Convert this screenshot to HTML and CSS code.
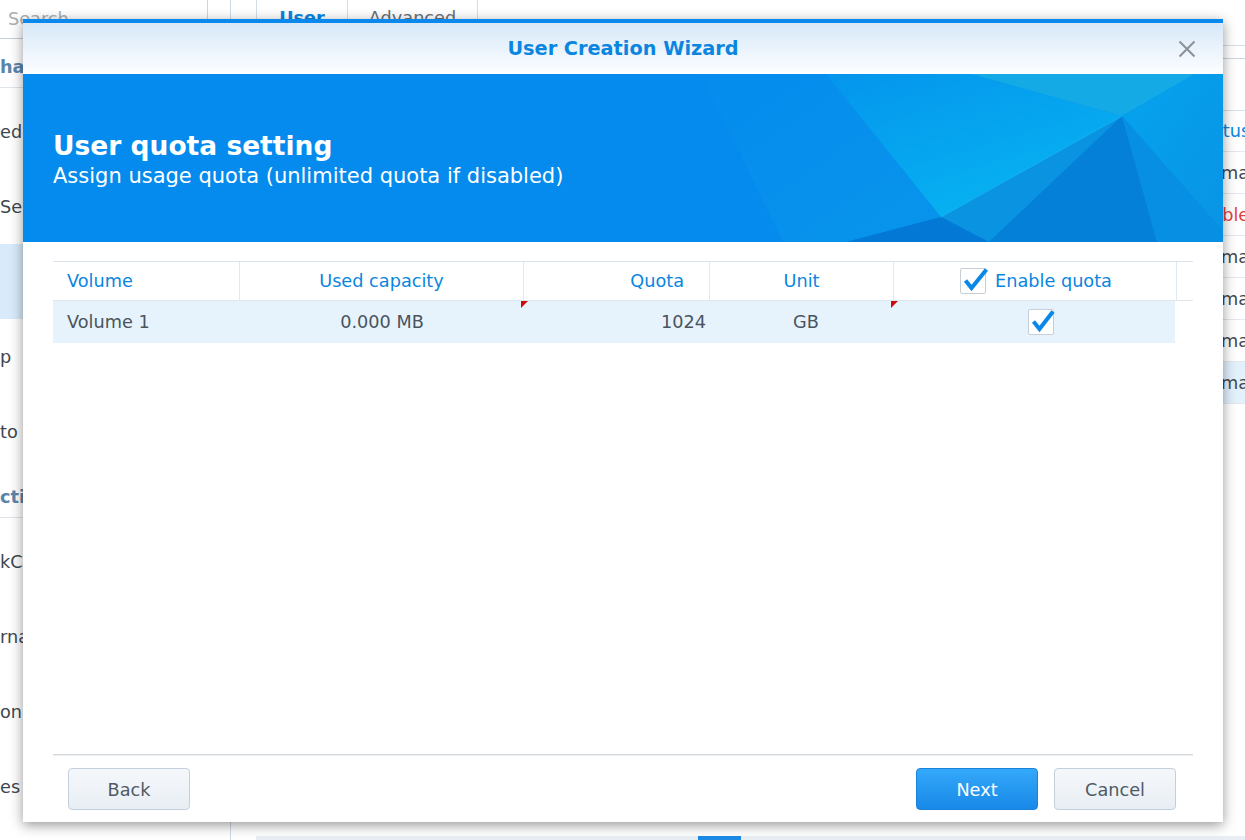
FILE: index.html
```html
<!DOCTYPE html>
<html lang="en">
<head>
<meta charset="utf-8">
<title>User Creation Wizard</title>
<link rel="stylesheet" href="styles.css">
</head>
<body>
<div class="app">
  <aside class="sidebar">
    <div class="search">Search</div>
    <div class="sec">har</div>
    <div class="item">ed</div>
    <div class="item">Ser</div>
    <div class="item item-active"></div>
    <div class="item">p</div>
    <div class="item">to</div>
    <div class="sec">cti</div>
    <div class="item">kC</div>
    <div class="item">rna</div>
    <div class="item">on</div>
    <div class="item">es</div>
  </aside>
  <main class="main">
    <div class="tabs">
      <div class="tab tab-active">User</div>
      <div class="tab">Advanced</div>
    </div>
    <div class="toolbar"></div>
    <div class="list">
      <div class="lrow lhead"><span></span><span class="lcell">Status</span></div>
      <div class="lrow"><span></span><span class="lcell">Normal</span></div>
      <div class="lrow"><span></span><span class="lcell red">Disabled</span></div>
      <div class="lrow"><span></span><span class="lcell">Normal</span></div>
      <div class="lrow"><span></span><span class="lcell">Normal</span></div>
      <div class="lrow"><span></span><span class="lcell">Normal</span></div>
      <div class="lrow lsel"><span></span><span class="lcell">Normal</span></div>
    </div>
    <div class="spacer"></div>
    <div class="pager"><span class="pg-active"></span></div>
  </main>
</div>

<div class="dialog">
  <div class="dlg-head">
    <span class="dlg-title">User Creation Wizard</span>
    <span class="close" aria-label="Close">
      <svg width="18" height="18" viewBox="0 0 18 18"><path d="M1.5 1.5 L16.5 16.5 M16.5 1.5 L1.5 16.5" stroke="#8c9196" stroke-width="2" fill="none"/></svg>
    </span>
  </div>
  <div class="banner">
    <svg class="banner-art" width="1200" height="168" viewBox="0 0 1200 168" preserveAspectRatio="none">
      <defs>
        <linearGradient id="g2" x1="0" y1="0" x2="0.6" y2="1">
          <stop offset="0" stop-color="#0495ed"/>
          <stop offset="1" stop-color="#07b3f1"/>
        </linearGradient>
        <linearGradient id="g1" x1="0" y1="0" x2="1" y2="1">
          <stop offset="0" stop-color="#058cee"/>
          <stop offset="1" stop-color="#0894eb"/>
        </linearGradient>
        <linearGradient id="g4" x1="0" y1="0" x2="1" y2="1">
          <stop offset="0" stop-color="#05a3ee"/>
          <stop offset="1" stop-color="#0894e4"/>
        </linearGradient>
      </defs>
      <rect x="0" y="0" width="1200" height="168" fill="#048bed"/>
      <polygon points="678,0 803,0 918,143 823,168 760,168" fill="url(#g1)"/>
      <polygon points="803,0 948,0 1099,42 918,143" fill="url(#g2)"/>
      <polygon points="948,0 1172,0 1099,42" fill="#14aae6"/>
      <polygon points="1172,0 1200,0 1200,157 1099,42" fill="url(#g4)"/>
      <polygon points="918,143 1099,42 966,168" fill="#0993e0"/>
      <polygon points="918,143 966,168 823,168" fill="#0379d5"/>
      <polygon points="1099,42 966,168 1134,168" fill="#0580d9"/>
      <polygon points="1099,42 1134,168 1200,168 1200,157" fill="#0790e3"/>
      <line x1="918" y1="143" x2="1099" y2="42" stroke="#20c0f4" stroke-width="1" opacity="0.6"/>
    </svg>
    <div class="banner-text">
      <h1 class="banner-title">User quota setting</h1>
      <p class="banner-sub">Assign usage quota (unlimited quota if disabled)</p>
    </div>
  </div>
  <div class="dlg-body">
    <div class="grid">
      <div class="ghead">
        <div class="hc hc-left">Volume</div>
        <div class="hc hc-center">Used capacity</div>
        <div class="hc hc-right">Quota</div>
        <div class="hc hc-center">Unit</div>
        <div class="hc hc-center hc-check">
          <span class="cb"><svg class="tick" width="26" height="26" viewBox="0 0 26 26"><path d="M5.5 12.5 L11.5 20 L26.5 1.5" stroke="#0a88e8" stroke-width="4" fill="none" stroke-linejoin="miter"/></svg></span>
          <span>Enable quota</span>
        </div>
        <div class="hc hc-last"></div>
      </div>
      <div class="grow">
        <div class="dc dc-left">Volume 1</div>
        <div class="dc dc-center">0.000 MB</div>
        <div class="dc dc-right dirty">1024</div>
        <div class="dc dc-center dc-unit">GB</div>
        <div class="dc dc-center dc-check dirty">
          <span class="cb"><svg class="tick" width="26" height="26" viewBox="0 0 26 26"><path d="M5.5 12.5 L11.5 20 L25 2.5" stroke="#0a88e8" stroke-width="4" fill="none" stroke-linejoin="miter"/></svg></span>
        </div>
      </div>
    </div>
  </div>
  <div class="dlg-foot">
    <button class="btn">Back</button>
    <div class="foot-right">
      <button class="btn btn-primary">Next</button>
      <button class="btn">Cancel</button>
    </div>
  </div>
</div>
</body>
</html>
```
FILE: styles.css
```css
* { box-sizing: border-box; margin: 0; padding: 0; }
html, body { width: 1245px; height: 840px; overflow: hidden; }
body {
  font-family: "DejaVu Sans", Verdana, sans-serif;
  font-size: 17.7px;
  color: #3f4952;
  background: #fff;
  position: relative;
}

/* background application */
.app { display: flex; height: 840px; }
.sidebar {
  width: 231px;
  flex: none;
  border-right: 1px solid #d0d8e0;
  overflow: hidden;
  white-space: nowrap;
}
.search {
  width: 208px;
  height: 39px;
  border-right: 1px solid #cbd5df;
  border-bottom: 1px solid #c3ced9;
  line-height: 38px;
  padding-left: 8px;
  color: #a9aeb4;
}
.sec {
  height: 49px;
  padding-top: 7px;
  border-bottom: 1px solid #dde4ea;
  margin-bottom: 6px;
  display: flex;
  align-items: center;
  font-weight: bold;
  color: #5a85ab;
}
.item {
  height: 75px;
  line-height: 75px;
  color: #3e4750;
  padding-top: 1px;
}
.item-active { background: #d9ebfb; }

.main {
  flex: 1;
  display: flex;
  flex-direction: column;
  overflow: hidden;
}
.tabs {
  height: 46px;
  border-bottom: 1px solid #d5dde5;
  padding-left: 25px;
  display: flex;
}
.tab {
  height: 36px;
  line-height: 36px;
  text-align: center;
  border-left: 1px solid #d5dde6;
  color: #6a7077;
  width: 131px;
}
.tab:last-child { border-right: 1px solid #d5dde6; }
.tab-active { width: 91px; color: #0a86e0; font-weight: bold; }
.toolbar {
  margin-top: 12px;
  border-top: 1px solid #ccd5de;
  height: 52px;
}
.list { margin-left: 25px; margin-right: -52px; }
.lrow {
  display: grid;
  grid-template-columns: 1fr 150px;
  height: 42px;
  border-bottom: 1px solid #e2e8ee;
  align-items: center;
}
.lhead { border-top: 1px solid #d8e0e8; color: #0a86e0; }
.lcell { text-align: center; }
.red { color: #e6403f; }
.lsel { background: #e3f1fd; }
.spacer { flex: 1; }
.pager {
  flex: none;
  height: 30px;
  margin-bottom: -26px;
  margin-left: 25px;
  background: #e8eef4;
  display: flex;
}
.pg-active { margin-left: 442px; width: 43px; background: #1c8be6; }

/* dialog window */
.dialog {
  position: absolute;
  left: 23px;
  top: 19px;
  width: 1200px;
  height: 803px;
  background: #fff;
  border-top: 4px solid #0a88ec;
  box-shadow: 0 3px 12px rgba(0, 0, 0, 0.42);
  display: flex;
  flex-direction: column;
}
.dlg-head {
  height: 51px;
  flex: none;
  background: linear-gradient(#d7e8f8, #fdfeff);
  display: flex;
  align-items: center;
  justify-content: center;
  position: relative;
}
.dlg-title { font-weight: bold; font-size: 19.3px; color: #0a86e0; }
.close {
  position: absolute;
  right: 27px;
  top: 17px;
  width: 18px;
  height: 18px;
  display: block;
}
.close svg { display: block; }

.banner {
  height: 168px;
  flex: none;
  position: relative;
  overflow: hidden;
  background: #048bed;
}
.banner-art { position: absolute; left: 0; top: 0; display: block; }
.banner-text { position: relative; padding: 56px 30px 0; color: #fff; }
.banner-title { font-size: 26.5px; font-weight: bold; line-height: 1.2; }
.banner-sub { font-size: 21px; line-height: 1.2; margin-top: 2px; }

.dlg-body { flex: 1; padding: 19px 30px 0; }
.ghead, .grow {
  display: grid;
  grid-template-columns: 187px 284px 186px 184px 283px 16px;
}
.ghead {
  height: 40px;
  border-top: 1px solid #d9e4ee;
  border-bottom: 1px solid #dde7f0;
}
.hc {
  display: flex;
  align-items: center;
  color: #0a86e0;
  border-right: 1px solid #e1e9f0;
  white-space: nowrap;
}
.hc-last { border-right: none; }
.hc-left { padding-left: 14px; }
.hc-center { justify-content: center; }
.hc-right { justify-content: flex-end; padding-right: 25px; }
.hc-check { gap: 9px; padding-left: 2px; }

.grow { height: 42px; }
.dc {
  display: flex;
  align-items: center;
  background: #e6f3fd;
  color: #4a545e;
  position: relative;
}
.dc-left { padding-left: 14px; }
.dc-center { justify-content: center; }
.dc-right { justify-content: flex-end; padding-right: 4px; }
.dc-unit { padding-left: 8px; }
.dc-check { padding-left: 12px; margin-right: 2px; }
.dirty::before {
  content: "";
  position: absolute;
  left: -3px;
  top: 0;
  width: 0;
  height: 0;
  border-top: 7px solid #c90c0c;
  border-right: 7px solid transparent;
}

.cb {
  width: 26px;
  height: 26px;
  border: 1px solid #c6cfd8;
  border-radius: 2px;
  background: #fff;
  position: relative;
  flex: none;
}
.tick { position: absolute; left: -1px; top: -1px; overflow: visible; }

.dlg-foot {
  flex: none;
  margin: 0 30px;
  border-top: 1px solid #d3d8dd;
  box-shadow: inset 0 1px 0 #eef1f4;
  padding: 13px 17px 12px 15px;
  display: flex;
  justify-content: space-between;
}
.foot-right { display: flex; gap: 16px; }
.btn {
  width: 122px;
  height: 42px;
  border-radius: 4px;
  border: 1px solid #c3cfdb;
  background: linear-gradient(#f5f8fb, #e8eef4);
  color: #4f5a66;
  font-family: "DejaVu Sans", Verdana, sans-serif;
  font-size: 17.7px;
  padding-top: 2px;
}
.btn-primary {
  border-color: #1a82d8;
  background: linear-gradient(#34a8fa, #1889e8);
  color: #fff;
}
```
